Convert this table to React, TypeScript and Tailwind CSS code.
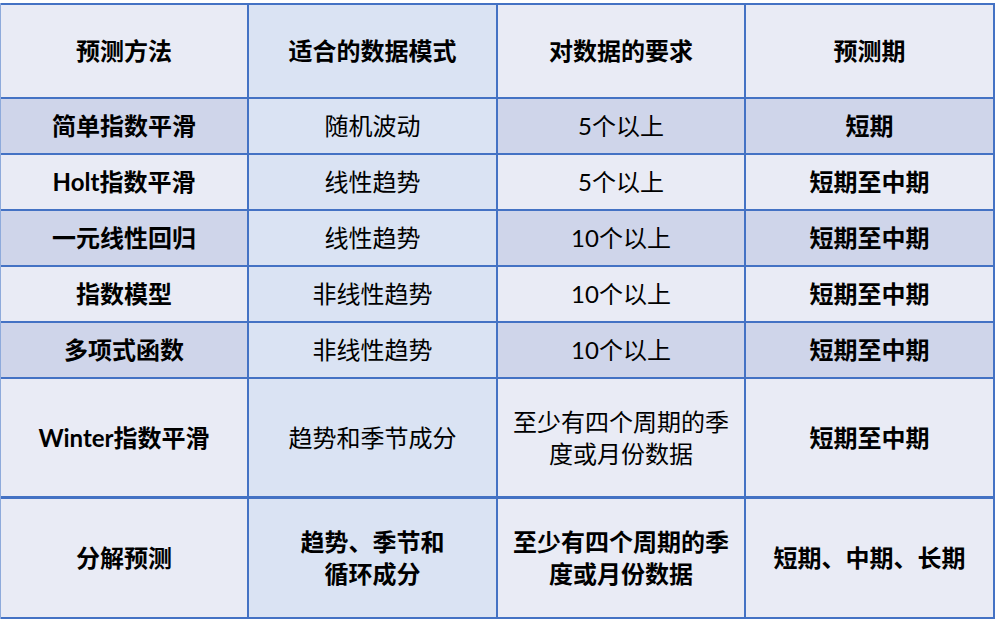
import React from "react";

type Row = { cells: React.ReactNode[]; dark: boolean; bold: boolean[] };

const rows: Row[] = [
  { cells: ["预测方法", "适合的数据模式", "对数据的要求", "预测期"], dark: false, bold: [true, true, true, true] },
  { cells: ["简单指数平滑", "随机波动", "5个以上", "短期"], dark: true, bold: [true, false, false, true] },
  { cells: ["Holt指数平滑", "线性趋势", "5个以上", "短期至中期"], dark: false, bold: [true, false, false, true] },
  { cells: ["一元线性回归", "线性趋势", "10个以上", "短期至中期"], dark: true, bold: [true, false, false, true] },
  { cells: ["指数模型", "非线性趋势", "10个以上", "短期至中期"], dark: false, bold: [true, false, false, true] },
  { cells: ["多项式函数", "非线性趋势", "10个以上", "短期至中期"], dark: true, bold: [true, false, false, true] },
  { cells: ["Winter指数平滑", "趋势和季节成分", "至少有四个周期的季度或月份数据", "短期至中期"], dark: false, bold: [true, false, false, true] },
  {
    cells: [
      "分解预测",
      <>趋势、季节和<br />循环成分</>,
      "至少有四个周期的季度或月份数据",
      "短期、中期、长期",
    ],
    dark: false,
    bold: [true, true, true, true],
  },
];

export default function App() {
  return (
    <div
      className="w-[1000px] h-[629px] bg-white overflow-hidden"
      style={{ fontFamily: '"Lato", "Noto Sans CJK SC", sans-serif' }}
    >
      <div className="mt-[3px] w-[995px] bg-[#4472c4] border-l border-l-[#8eaadb] pt-[2px] pb-[2px] pr-[2px]">
        <div className="grid grid-cols-[246px_247px_246px_247px] grid-rows-[92px_54px_54px_54px_54px_54px_117px_119px] gap-[2px]">
          {rows.map((r, ri) =>
            r.cells.map((c, ci) => {
              const bg =
                ci === 1 ? "bg-[#dae3f3]" : r.dark ? "bg-[#cfd5ea]" : "bg-[#e9ebf5]";
              const last = ri === rows.length - 1;
              return (
                <div
                  key={ri + "-" + ci}
                  className={
                    "flex items-center justify-center text-center px-[12px] text-[24px] leading-[32px] text-black " +
                    bg +
                    (r.bold[ci] ? " font-bold" : " font-normal") +
                    (last ? " border-t border-t-[#4472c4]" : "")
                  }
                >
                  <span>{c}</span>
                </div>
              );
            })
          )}
        </div>
      </div>
    </div>
  );
}
